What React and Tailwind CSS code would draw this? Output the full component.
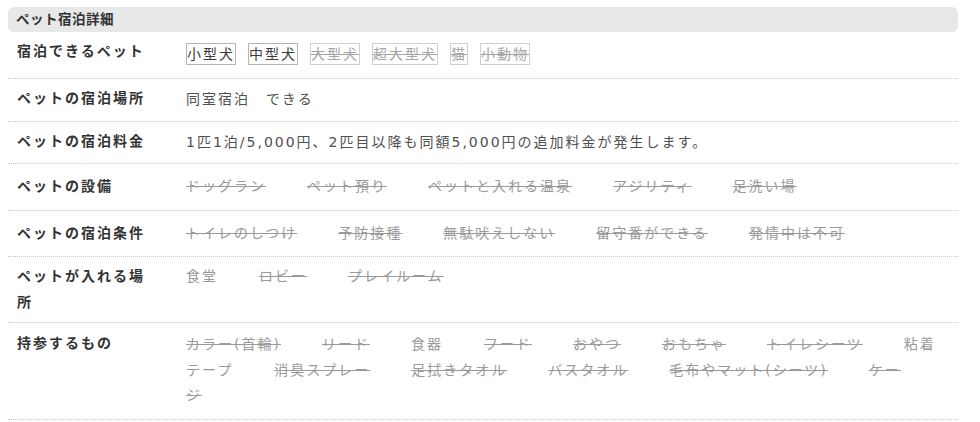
const petTypes = [
  { name: "小型犬", ok: true },
  { name: "中型犬", ok: true },
  { name: "大型犬", ok: false },
  { name: "超大型犬", ok: false },
  { name: "猫", ok: false },
  { name: "小動物", ok: false },
];

const facilities = [
  { name: "ドッグラン", ok: false },
  { name: "ペット預り", ok: false },
  { name: "ペットと入れる温泉", ok: false },
  { name: "アジリティ", ok: false },
  { name: "足洗い場", ok: false },
];

const conditions = [
  { name: "トイレのしつけ", ok: false },
  { name: "予防接種", ok: false },
  { name: "無駄吠えしない", ok: false },
  { name: "留守番ができる", ok: false },
  { name: "発情中は不可", ok: false },
];

const places = [
  { name: "食堂", ok: true },
  { name: "ロビー", ok: false },
  { name: "プレイルーム", ok: false },
];

const belongings = [
  { name: "カラー(首輪)", ok: false },
  { name: "リード", ok: false },
  { name: "食器", ok: true },
  { name: "フード", ok: false },
  { name: "おやつ", ok: false },
  { name: "おもちゃ", ok: false },
  { name: "トイレシーツ", ok: false },
  { name: "粘着テープ", ok: true },
  { name: "消臭スプレー", ok: false },
  { name: "足拭きタオル", ok: false },
  { name: "バスタオル", ok: false },
  { name: "毛布やマット(シーツ)", ok: false },
  { name: "ケージ", ok: false },
];

const Row = ({ label, children, labelPad = "pt-[7px]", valuePad = "pt-[8px] pb-[8px]" }) => (
  <div className="flex items-start border-b border-dotted border-[#c8c8c8]">
    <div className={`w-[178px] shrink-0 pl-[9px] pr-[33px] ${labelPad} font-bold text-[#333] leading-[25.5px]`}>
      {label}
    </div>
    <div className={`flex-1 pr-[14px] ${valuePad} leading-[25.5px]`}>{children}</div>
  </div>
);

const Items = ({ list }) =>
  list.map((it) => (
    <span
      key={it.name}
      className={`mr-[41px] ${it.ok ? "text-[#999]" : "text-[#9a9a9a] line-through"}`}
    >
      {it.name}
    </span>
  ));

const App = () => {
  return (
    <div
      className="w-[980px] h-[422px] bg-white px-[8px] pt-[7px] text-[14px] tracking-[2px] text-[#505050] overflow-hidden"
      style={{ fontFamily: '"DejaVu Sans", "Noto Sans CJK JP", sans-serif' }}
    >
      <div className="w-[950px]">
        <div className="h-[25px] rounded-[6px] bg-[#e8e8e8] pl-[8px] text-[13.5px] font-bold tracking-[0.5px] text-[#333] leading-[25px]">
          ペット宿泊詳細
        </div>

        <Row label="宿泊できるペット" valuePad="pt-[11px] pb-[13px]">
          <div className="flex flex-wrap">
            {petTypes.map((p) => (
              <span
                key={p.name}
                className={`mr-[12px] inline-block border leading-[20px] ${
                  p.ok
                    ? "border-[#b5b5b5] text-[#3a3a3a]"
                    : "border-[#cfcfcf] text-[#a5a5a5] line-through"
                }`}
              >
                {p.name}
              </span>
            ))}
          </div>
        </Row>

        <Row label="ペットの宿泊場所">
          <span>同室宿泊　できる</span>
        </Row>

        <Row label="ペットの宿泊料金">
          <span>1匹1泊/5,000円、2匹目以降も同額5,000円の追加料金が発生します。</span>
        </Row>

        <Row label="ペットの設備" labelPad="pt-[10px]" valuePad="pt-[10px] pb-[10px]">
          <Items list={facilities} />
        </Row>

        <Row label="ペットの宿泊条件" labelPad="pt-[10px]" valuePad="pt-[10px] pb-[10px]">
          <Items list={conditions} />
        </Row>

        <Row label="ペットが入れる場所" labelPad="pt-[7px] pb-[7px]" valuePad="pt-[7px]">
          <Items list={places} />
        </Row>

        <Row label="持参するもの" labelPad="pt-[8px]" valuePad="pt-[9px] pb-[10px]">
          <Items list={belongings} />
        </Row>
      </div>
    </div>
  );
};

export default App;
